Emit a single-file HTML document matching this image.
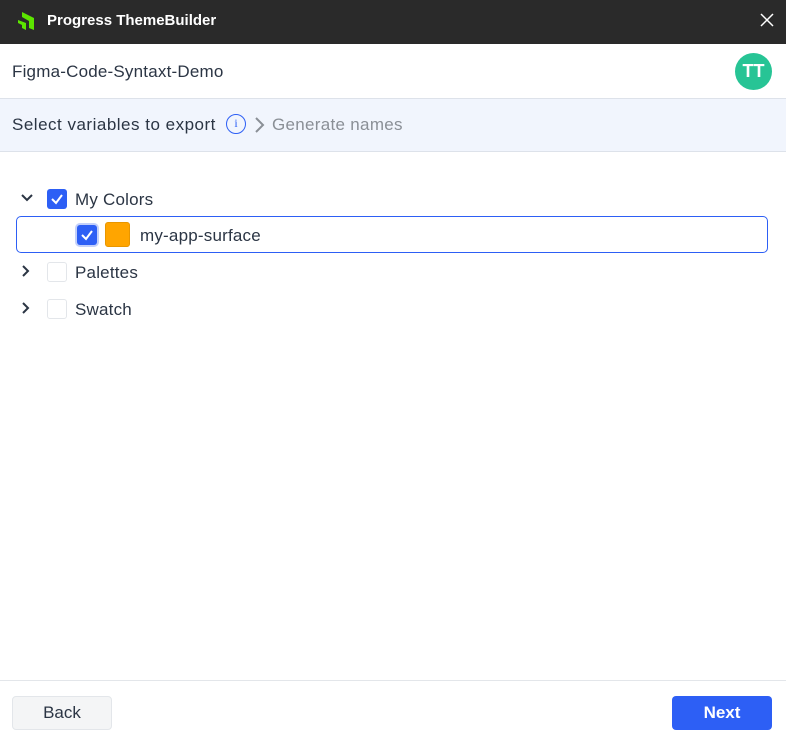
<!DOCTYPE html>
<html><head><style>
*{box-sizing:border-box;margin:0;padding:0}
body{width:786px;height:740px;background:#fff;font-family:"Liberation Sans",sans-serif;position:relative;overflow:hidden;color:#2b3544}
.top{position:absolute;left:0;top:0;width:786px;height:44px;background:#2a2a2a;color:#fff}
.hdr{position:absolute;top:44px;left:0;width:786px;height:55px;border-bottom:1px solid #dde2ea}
.bc{position:absolute;top:99px;left:0;width:786px;height:53px;background:#f1f5fd;border-bottom:1px solid #dde2ea}
.t{position:absolute;font-size:17px}
.cb{position:absolute;width:20px;height:20px;border-radius:3px}
.on{background:#2d5ff5}
.off{border:1px solid #e3e6ea;background:#fff}
.foot{position:absolute;top:680px;left:0;width:786px;border-top:1px solid #e3e6ea}
</style></head><body>
<div class="top">
<svg style="position:absolute;left:17px;top:11px" width="20" height="20" viewBox="0 0 20 20"><path d="M5 1 L17 7 V19 L12 17 V10 L5 6Z" fill="#5ce500"/><path d="M1 9 L9 12 V19 L5 17 V14 L1 12Z" fill="#5ce500"/></svg>
<div style="position:absolute;left:47px;top:12px;font-size:15px;font-weight:bold">Progress ThemeBuilder</div>
<svg style="position:absolute;left:760px;top:13px" width="14" height="14"><path d="M1 1L13 13M13 1L1 13" stroke="#fff" stroke-width="1.5"/></svg>
</div>
<div class="hdr">
<div class="t" style="left:12px;top:18px;letter-spacing:0.2px">Figma-Code-Syntaxt-Demo</div>
<div style="position:absolute;left:735px;top:9px;width:37px;height:37px;border-radius:50%;background:#27c495;color:#fff;font-size:18px;text-align:center;line-height:37px;font-weight:bold">TT</div>
</div>
<div class="bc">
<div class="t" style="left:12px;top:16px;letter-spacing:0.5px">Select variables to export</div>
<div style="position:absolute;left:226px;top:15px;width:20px;height:20px;border:1.5px solid #2d5ff5;border-radius:50%;color:#2d5ff5;font-size:12px;text-align:center;line-height:17px;font-family:'Liberation Serif',serif">i</div>
<svg style="position:absolute;left:254px;top:18px" width="12" height="16"><path d="M2 1L9 8L2 15" stroke="#8a8f96" stroke-width="2" fill="none"/></svg>
<div class="t" style="left:272px;top:16px;color:#8a8f96;letter-spacing:0.3px">Generate names</div>
</div>
<svg style="position:absolute;left:20px;top:192px" width="14" height="12"><path d="M2 3L7 8L12 3" stroke="#2b3544" stroke-width="2" fill="none"/></svg>
<div class="cb on" style="left:47px;top:189px"><svg width="20" height="20"><path d="M5 10L9 14L15 6" stroke="#fff" stroke-width="2" fill="none"/></svg></div>
<div class="t" style="left:75px;top:190px;letter-spacing:0.2px">My Colors</div>
<div style="position:absolute;left:16px;top:216px;width:752px;height:37px;border:1px solid #2d5ff5;border-radius:5px"></div>
<div class="cb on" style="left:77px;top:225px;box-shadow:0 0 0 2px #c3d0fa"><svg width="20" height="20"><path d="M5 10L9 14L15 6" stroke="#fff" stroke-width="2" fill="none"/></svg></div>
<div style="position:absolute;left:105px;top:222px;width:25px;height:25px;background:#ffa500;border-radius:3px;border:1px solid #e89600"></div>
<div class="t" style="left:140px;top:226px;letter-spacing:0.2px">my-app-surface</div>
<svg style="position:absolute;left:20px;top:264px" width="12" height="14"><path d="M3 2L8 7L3 12" stroke="#2b3544" stroke-width="2" fill="none"/></svg>
<div class="cb off" style="left:47px;top:262px"></div>
<div class="t" style="left:75px;top:263px;letter-spacing:0.2px">Palettes</div>
<svg style="position:absolute;left:20px;top:301px" width="12" height="14"><path d="M3 2L8 7L3 12" stroke="#2b3544" stroke-width="2" fill="none"/></svg>
<div class="cb off" style="left:47px;top:299px"></div>
<div class="t" style="left:75px;top:300px;letter-spacing:0.2px">Swatch</div>
<div class="foot"></div>
<div style="position:absolute;left:12px;top:696px;width:100px;height:34px;background:#f4f5f6;border:1px solid #e3e6ea;border-radius:4px;text-align:center;line-height:32px;font-size:17px">Back</div>
<div style="position:absolute;left:672px;top:696px;width:100px;height:34px;background:#2d5ff5;border-radius:4px;text-align:center;line-height:34px;font-size:17px;color:#fff;font-weight:bold">Next</div>
</body></html>
